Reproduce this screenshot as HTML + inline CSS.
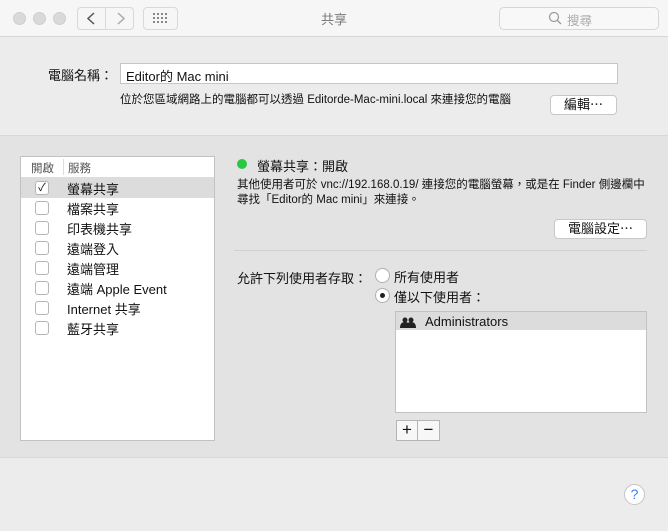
<!DOCTYPE html>
<html><head><meta charset="utf-8"><style>
*{margin:0;padding:0;box-sizing:border-box}
body{width:668px;height:531px;overflow:hidden;background:#ececec;font-family:"Liberation Sans","Noto Sans CJK TC",sans-serif;font-size:13px;color:#111;position:relative}
.a{position:absolute}
.tb{left:0;top:0;width:668px;height:37px;background:#f6f6f6;border-bottom:1px solid #d6d6d6}
.dot{width:13px;height:13px;border-radius:50%;background:#d9d9d9;border:1px solid #cfcfcf;top:12px}
.btn{background:#fff;border:1px solid #c8c8c8;border-radius:4px;text-align:center}
.tbtn{border:1px solid #d9d9d9;border-radius:4px;background:#f6f6f6}
.panel{left:0;top:135px;width:668px;height:323px;background:#e3e3e3;border-top:1px solid #d8d8d8;border-bottom:1px solid #d8d8d8}
.cb{width:14px;height:14px;border:1px solid #b5b5b5;border-radius:3px;background:#fff;left:14px}
.row{left:0;width:193px;height:20px}
.row span{position:absolute;left:46px;top:1px;font-size:13px}
</style></head><body>
<div class="a tb"></div>
<div class="a dot" style="left:13px"></div>
<div class="a dot" style="left:33px"></div>
<div class="a dot" style="left:53px"></div>
<div class="a tbtn" style="left:77px;top:7px;width:29px;height:23px;border-radius:4px 0 0 4px"></div>
<div class="a tbtn" style="left:105px;top:7px;width:29px;height:23px;border-radius:0 4px 4px 0"></div>
<svg class="a" style="left:77px;top:7px" width="58" height="23"><path d="M17 6 L11 11.5 L17 17" stroke="#555" stroke-width="1.5" fill="none"/><path d="M41 6 L47 11.5 L41 17" stroke="#aaa" stroke-width="1.5" fill="none"/></svg>
<div class="a tbtn" style="left:143px;top:7px;width:35px;height:23px"></div>
<svg class="a" style="left:153px;top:13px" width="16" height="12"><g fill="#888"><rect x="0" y="0" width="2" height="2"/><rect x="4" y="0" width="2" height="2"/><rect x="8" y="0" width="2" height="2"/><rect x="12" y="0" width="2" height="2"/><rect x="0" y="4" width="2" height="2"/><rect x="4" y="4" width="2" height="2"/><rect x="8" y="4" width="2" height="2"/><rect x="12" y="4" width="2" height="2"/><rect x="0" y="8" width="2" height="2"/><rect x="4" y="8" width="2" height="2"/><rect x="8" y="8" width="2" height="2"/><rect x="12" y="8" width="2" height="2"/></g></svg>
<div class="a" style="left:0;width:668px;top:9px;text-align:center;color:#7a7a7a;font-size:13px">共享</div>
<div class="a" style="left:499px;top:7px;width:160px;height:23px;border:1px solid #d6d6d6;border-radius:5px;background:#f8f8f8"></div>
<svg class="a" style="left:548px;top:11px" width="14" height="15"><circle cx="6" cy="6" r="4.5" stroke="#999" stroke-width="1.2" fill="none"/><path d="M9.3 9.3 L13 13" stroke="#999" stroke-width="1.3"/></svg>
<div class="a" style="left:567px;top:10px;color:#aaa;font-size:12.5px">搜尋</div>

<div class="a" style="left:48px;top:65px;font-size:13px">電腦名稱：</div>
<div class="a" style="left:120px;top:63px;width:498px;height:21px;background:#fff;border:1px solid #c6c6c6"><span style="position:absolute;left:5px;top:2px;font-size:13px">Editor的 Mac mini</span></div>
<div class="a" style="left:120px;top:91px;font-size:11.5px">位於您區域網路上的電腦都可以透過 Editorde-Mac-mini.local 來連接您的電腦</div>
<div class="a btn" style="left:550px;top:95px;width:67px;height:20px;font-size:13px;line-height:18px">編輯⋯</div>

<div class="a panel"></div>
<div class="a" style="left:20px;top:156px;width:195px;height:285px;background:#fff;border:1px solid #c2c2c2"></div>
<div class="a" style="left:21px;top:157px;width:193px;height:20px;font-size:11.5px;color:#555"><span style="position:absolute;left:10px;top:3px">開啟</span><span style="position:absolute;left:42px;top:2px;width:1px;height:16px;background:#ddd"></span><span style="position:absolute;left:47px;top:3px">服務</span></div>
<div class="a" style="left:21px;top:177px;width:193px;height:21px;background:#dcdcdc"></div>
<div class="a" style="left:21px;top:178px">
<div class="a row" style="top:0"><div class="a cb" style="top:3px;text-align:center;font-size:11px;line-height:12px">✓</div><span>螢幕共享</span></div>
<div class="a row" style="top:20px"><div class="a cb" style="top:3px"></div><span>檔案共享</span></div>
<div class="a row" style="top:40px"><div class="a cb" style="top:3px"></div><span>印表機共享</span></div>
<div class="a row" style="top:60px"><div class="a cb" style="top:3px"></div><span>遠端登入</span></div>
<div class="a row" style="top:80px"><div class="a cb" style="top:3px"></div><span>遠端管理</span></div>
<div class="a row" style="top:100px"><div class="a cb" style="top:3px"></div><span>遠端 Apple Event</span></div>
<div class="a row" style="top:120px"><div class="a cb" style="top:3px"></div><span>Internet 共享</span></div>
<div class="a row" style="top:140px"><div class="a cb" style="top:3px"></div><span>藍牙共享</span></div>
</div>

<div class="a" style="left:237px;top:159px;width:10px;height:10px;border-radius:50%;background:#2ac840"></div>
<div class="a" style="left:257px;top:156px;font-size:13px">螢幕共享：開啟</div>
<div class="a" style="left:237px;top:178px;font-size:11.5px;line-height:14.5px">其他使用者可於 vnc://192.168.0.19/ 連接您的電腦螢幕，或是在 Finder 側邊欄中<br>尋找「Editor的 Mac mini」來連接。</div>
<div class="a btn" style="left:554px;top:219px;width:93px;height:20px;font-size:13px;line-height:18px">電腦設定⋯</div>
<div class="a" style="left:234px;top:250px;width:413px;height:1px;background:#d0d0d0"></div>
<div class="a" style="left:237px;top:268px;font-size:13px">允許下列使用者存取：</div>
<div class="a" style="left:375px;top:268px;width:15px;height:15px;border-radius:50%;background:#fff;border:1px solid #b0b0b0"></div>
<div class="a" style="left:394px;top:267px;font-size:13px">所有使用者</div>
<div class="a" style="left:375px;top:288px;width:15px;height:15px;border-radius:50%;background:#fff;border:1px solid #b0b0b0"><div style="position:absolute;left:4px;top:4px;width:5px;height:5px;border-radius:50%;background:#222"></div></div>
<div class="a" style="left:394px;top:287px;font-size:13px">僅以下使用者：</div>
<div class="a" style="left:395px;top:311px;width:252px;height:102px;background:#fff;border:1px solid #c2c2c2"></div>
<div class="a" style="left:396px;top:312px;width:250px;height:18px;background:#dcdcdc"></div>
<svg class="a" style="left:400px;top:317px" width="16" height="11"><g fill="#222"><circle cx="5" cy="3" r="2.5"/><circle cx="11" cy="3" r="2.5"/><path d="M0 11 Q0 5 5 5 Q10 5 10 11Z"/><path d="M6 11 Q6 5 11 5 Q16 5 16 11Z"/></g></svg>
<div class="a" style="left:425px;top:314px;font-size:13px">Administrators</div>
<div class="a" style="left:396px;top:420px;width:22px;height:21px;border:1px solid #b5b5b5;background:#f7f7f7;text-align:center;font-size:17px;line-height:18px">+</div>
<div class="a" style="left:417px;top:420px;width:23px;height:21px;border:1px solid #b5b5b5;background:#f7f7f7;text-align:center;font-size:17px;line-height:18px">−</div>

<div class="a" style="left:624px;top:484px;width:21px;height:21px;border-radius:50%;background:#fff;border:1px solid #c4c4c4;text-align:center;color:#3a82f7;font-size:14px;line-height:19px">?</div>
</body></html>
